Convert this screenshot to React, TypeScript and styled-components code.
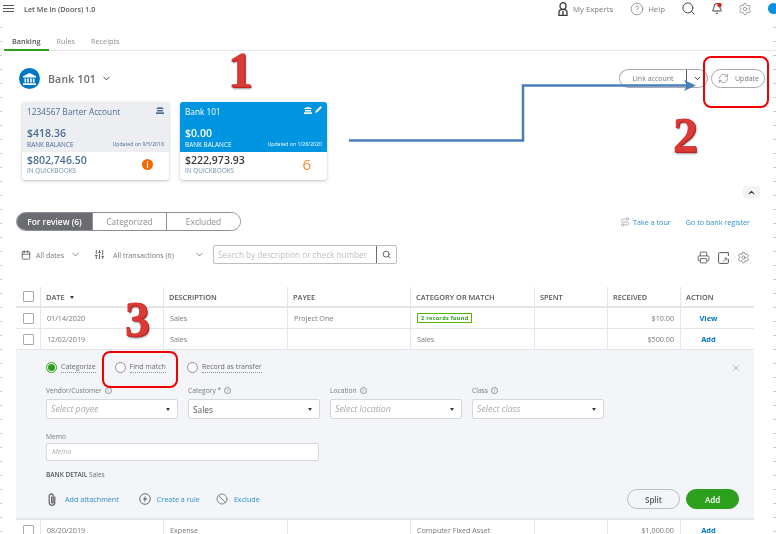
import React from 'react';
import styled, {createGlobalStyle} from 'styled-components';
import {
    Ban, Calendar, ChevronDown, ChevronUp, CircleHelp, Pencil, Printer,
    RefreshCw, Search, Settings, SlidersVertical, X, Route,
} from 'lucide-react';

const GlobalStyle = createGlobalStyle`
  html, body {
    margin: 0;
    padding: 0;
    background: #fff;
  }
  * {
    box-sizing: border-box;
  }
`;

const Page = styled.div`
  position: relative;
  width: 776px;
  height: 534px;
  overflow: hidden;
  background: #fff;
  color: #393a3d;
  font-family: "Open Sans", "Liberation Sans", sans-serif;
  font-size: 8px;
  filter: blur(0.35px);
`;

const Header = styled.div`
  display: flex;
  align-items: center;
  height: 17px;
  padding: 0 8px 0 3px;
  margin-bottom: 15px;
`;

const Title = styled.span`
  margin-left: 10px;
  font-size: 7.2px;
  font-weight: 600;
  color: #55575a;
`;

const HeaderRight = styled.div`
  display: flex;
  align-items: center;
  margin-left: auto;
  margin-right: 16px;
  color: #55575a;
`;

const HeaderItem = styled.span<{$gap: number; $iconGap?: number}>`
  display: flex;
  align-items: center;
  gap: ${p => p.$iconGap ?? 4}px;
  margin-right: ${p => p.$gap}px;
  font-size: 7.8px;
  color: #77797c;
`;

const Tabs = styled.div`
  display: flex;
  height: 19px;
  margin-left: 4px;
  border-bottom: 1px solid #e3e5e8;
`;

const Tab = styled.div<{$active?: boolean}>`
  height: 19px;
  padding: 4px 8px 0;
  font-size: 7.3px;
  font-weight: ${p => p.$active ? 600 : 400};
  color: ${p => p.$active ? '#55575a' : '#8d9096'};
  border-bottom: ${p => p.$active ? '2px solid #2ca01c' : 'none'};
`;

const AccountBar = styled.div`
  display: flex;
  align-items: center;
  height: 21px;
  margin-top: 17px;
  padding-left: 19px;
`;

const BankBadge = styled.div`
  display: flex;
  align-items: center;
  justify-content: center;
  width: 21px;
  height: 21px;
  border-radius: 50%;
  background: #0077c5;
  color: #fff;
`;

const BankName = styled.span`
  margin: 0 5px 0 8px;
  font-size: 10.5px;
  font-weight: 600;
  letter-spacing: 0.2px;
  color: #6b6c72;
`;

const AccountActions = styled.div`
  display: flex;
  align-items: center;
  margin-left: auto;
  margin-right: 11px;
`;

const LinkButton = styled.div`
  display: flex;
  align-items: center;
  justify-content: center;
  width: 68px;
  height: 19px;
  border: 1px solid #a8aaae;
  border-right: 1px solid #55575a;
  border-radius: 10px 0 0 10px;
  font-size: 7px;
  color: #77797c;
`;

const LinkCaret = styled.div`
  display: flex;
  align-items: center;
  justify-content: center;
  width: 21px;
  height: 19px;
  border: 1px solid #a8aaae;
  border-left: none;
  border-radius: 0 10px 10px 0;
  margin-right: 3px;
  color: #393a3d;
`;

const UpdateButton = styled.div`
  display: flex;
  align-items: center;
  gap: 6px;
  width: 54px;
  height: 19px;
  padding-left: 6px;
  border: 1px solid #a8aaae;
  border-radius: 10px;
  font-size: 7px;
  color: #77797c;
`;

const Cards = styled.div`
  display: flex;
  gap: 11px;
  margin-top: 13px;
  padding-left: 22px;
`;

const Card = styled.div`
  width: 147px;
  height: 78px;
  border-radius: 3px;
  overflow: hidden;
  background: #fff;
  box-shadow: 0 1px 3px rgba(0, 0, 0, 0.25);
`;

const CardTop = styled.div<{$selected?: boolean}>`
  display: flex;
  flex-direction: column;
  height: 50px;
  padding: 3px 5px 0 5px;
  background: ${p => p.$selected ? '#0095e0' : '#eceef1'};
  color: ${p => p.$selected ? '#fff' : '#4d6d94'};
`;

const CardTitle = styled.div`
  display: flex;
  align-items: center;
  justify-content: space-between;
  height: 12px;
  font-size: 8.3px;
`;

const CardIcons = styled.span`
  display: flex;
  align-items: center;
  gap: 3px;
  margin-top: -3px;
`;

const CardAmount = styled.div`
  margin-top: 10px;
  height: 13px;
  font-size: 10.5px;
  font-weight: 600;
  line-height: 13px;
`;

const CardFoot = styled.div`
  display: flex;
  align-items: center;
  justify-content: space-between;
  font-size: 6.4px;
  line-height: 9px;
`;

const CardUpdated = styled.span`
  font-size: 5.2px;
`;

const CardBottom = styled.div`
  display: flex;
  align-items: center;
  justify-content: space-between;
  height: 28px;
  padding: 0 16px 3px 5px;
`;

const BottomAmount = styled.div<{$dark?: boolean}>`
  font-size: 10.5px;
  font-weight: 600;
  line-height: 13px;
  color: ${p => p.$dark ? '#393a3d' : '#4d6d94'};
`;

const BottomLabel = styled.div`
  font-size: 6.4px;
  line-height: 8px;
  color: #6f8caf;
`;

const InfoDot = styled.span`
  display: flex;
  align-items: center;
  justify-content: center;
  width: 11px;
  height: 11px;
  border-radius: 50%;
  background: #f56a00;
  color: #fff;
  font-size: 8px;
  font-weight: 700;
`;

const CountBadge = styled.span`
  font-size: 15px;
  line-height: 15px;
  color: #f58a2c;
`;

const CollapseRow = styled.div`
  display: flex;
  justify-content: flex-end;
  height: 12px;
  margin-top: 6px;
  padding-right: 16px;
`;

const CollapseButton = styled.div`
  display: flex;
  align-items: center;
  justify-content: center;
  width: 17px;
  height: 12px;
  background: #f1f2f4;
  border-radius: 2px;
  color: #393a3d;
`;

const SegmentRow = styled.div`
  display: flex;
  align-items: center;
  justify-content: space-between;
  margin-top: 14px;
  padding: 0 26px 0 16px;
`;

const Segments = styled.div`
  display: flex;
  width: 225px;
  height: 19px;
  border: 1px solid #8d9096;
  border-radius: 10px;
  overflow: hidden;
`;

const Segment = styled.div<{$active?: boolean; $w: number}>`
  display: flex;
  align-items: center;
  justify-content: center;
  width: ${p => p.$w}px;
  border-right: 1px solid #8d9096;
  font-size: 8.4px;
  font-weight: ${p => p.$active ? 600 : 400};
  background: ${p => p.$active ? '#6b6c72' : '#fff'};
  color: ${p => p.$active ? '#fff' : '#8d9096'};

  &:last-child {
    border-right: none;
  }
`;

const TourLinks = styled.div`
  display: flex;
  align-items: center;
  font-size: 7.2px;
  color: #2d8fd0;
`;

const TourLink = styled.span`
  display: flex;
  align-items: center;
  gap: 3px;
  margin-right: 15px;
  color: #2d8fd0;
`;

const Toolbar = styled.div`
  display: flex;
  align-items: center;
  height: 19px;
  margin-top: 14px;
  padding: 0 26px 0 21px;
  color: #55575a;
`;

const FilterText = styled.span<{$w: number; $ml: number}>`
  width: ${p => p.$w}px;
  margin-left: ${p => p.$ml}px;
  font-size: 7.1px;
  color: #77797c;
`;

const FilterSpacer = styled.span`
  width: 13px;
`;

const SearchBox = styled.div`
  display: flex;
  width: 184px;
  height: 19px;
  margin-left: 8px;
  border: 1px solid #babec5;
  border-radius: 2px;
`;

const SearchText = styled.div`
  flex: 1;
  padding-left: 4px;
  border-right: 1px solid #6b6c72;
  font-size: 8.2px;
  line-height: 17px;
  color: #babec5;
  white-space: nowrap;
`;

const SearchIcon = styled.div`
  display: flex;
  align-items: center;
  justify-content: center;
  width: 19px;
  color: #393a3d;
`;

const ToolIcons = styled.div`
  display: flex;
  align-items: center;
  gap: 8px;
  margin-left: auto;
  margin-top: 6px;
  color: #55575a;
`;

const Table = styled.div`
  margin: 23px 0 0 16px;
  width: 738px;
`;

const Row = styled.div<{$head?: boolean}>`
  display: grid;
  grid-template-columns: 24px 123px 124px 123px 124px 73px 73px 74px;
  height: 21px;
  border-bottom: ${p => p.$head ? 2 : 1}px solid #e3e5e8;
`;

const Cell = styled.div<{$head?: boolean; $right?: boolean; $center?: boolean}>`
  display: flex;
  align-items: center;
  justify-content: ${p => p.$right ? 'flex-end' : p.$center ? 'center' : 'flex-start'};
  padding: ${p => p.$right ? '0 6px 0 0' : p.$center ? '0 18px 0 0' : p.$head ? '0 0 0 5px' : '0 0 0 6px'};
  border-left: 1px solid #dfe7f1;
  font-size: ${p => p.$head ? 7.4 : 7.2}px;
  font-weight: ${p => p.$head ? 600 : 400};
  color: ${p => p.$head ? '#55575a' : '#77797c'};
  white-space: nowrap;

  &:first-child {
    border-left: none;
    justify-content: center;
    padding: 0 0 0 1px;
  }
`;

const Checkbox = styled.span`
  width: 11px;
  height: 11px;
  background: #fff;
  border: 1px solid #a8aaae;
  border-radius: 1px;
`;

const SortArrow = styled.span`
  width: 0;
  height: 0;
  margin: 1px 0 0 5px;
  border-left: 2.5px solid transparent;
  border-right: 2.5px solid transparent;
  border-top: 3px solid #393a3d;
`;

const RecordsTag = styled.span`
  padding: 0 3px;
  border: 1px solid #53b700;
  font-size: 5.5px;
  line-height: 8px;
  font-weight: 700;
  letter-spacing: 0.3px;
  color: #2ca01c;
`;

const ActionLink = styled.span`
  font-size: 7.5px;
  font-weight: 700;
  color: #0077c5;
`;

const Panel = styled.div`
  position: relative;
  height: 170px;
  padding: 10px 0 0 30px;
  background: #f4f5f8;
  border-bottom: 2px solid #e3e5e8;
`;

const RadioRow = styled.div`
  display: flex;
  align-items: center;
  height: 14px;
`;

const RadioItem = styled.div<{$gap: number}>`
  display: flex;
  align-items: center;
  gap: 4px;
  margin-right: ${p => p.$gap}px;
  font-size: 7px;
  color: #6b6c72;
`;

const Radio = styled.span<{$on?: boolean}>`
  display: flex;
  align-items: center;
  justify-content: center;
  width: 11px;
  height: 11px;
  border-radius: 50%;
  background: #fff;
  border: 1px solid ${p => p.$on ? '#2ca01c' : '#8d9096'};

  &::after {
    content: '';
    width: 7px;
    height: 7px;
    border-radius: 50%;
    background: ${p => p.$on ? '#2ca01c' : 'transparent'};
  }
`;

const Underlined = styled.span`
  border-bottom: 1px dotted #8d9096;
  line-height: 9px;
  padding-bottom: 1px;
`;

const Fields = styled.div`
  display: flex;
  gap: 10px;
  margin-top: 12px;
`;

const Field = styled.div`
  width: 132px;
`;

const FieldLabel = styled.div`
  display: flex;
  align-items: center;
  gap: 3px;
  height: 9px;
  font-size: 6.7px;
  color: #77797c;
`;

const SmallHelp = styled.span`
  display: flex;
  align-items: center;
  justify-content: center;
  width: 7px;
  height: 7px;
  border: 1px solid #8d9096;
  border-radius: 50%;
  font-size: 4px;
  line-height: 1;
`;

const SelectBox = styled.div<{$empty?: boolean}>`
  display: flex;
  align-items: center;
  justify-content: space-between;
  height: 20px;
  margin-top: 4px;
  padding: 0 7px 0 4px;
  background: #fff;
  border: 1px solid #d4d7dc;
  border-radius: 2px;
  font-size: ${p => p.$empty ? 8.8 : 8.4}px;
  font-style: ${p => p.$empty ? 'italic' : 'normal'};
  color: ${p => p.$empty ? '#a8aaae' : '#55575a'};
`;

const Caret = styled.span`
  width: 0;
  height: 0;
  border-left: 2px solid transparent;
  border-right: 2px solid transparent;
  border-top: 3px solid #393a3d;
`;

const MemoBlock = styled.div`
  margin-top: 13px;
  width: 273px;
`;

const MemoInput = styled.div`
  height: 18px;
  margin-top: 2px;
  padding-left: 5px;
  background: #fff;
  border: 1px solid #d4d7dc;
  border-radius: 2px;
  font-size: 7px;
  font-style: italic;
  line-height: 16px;
  color: #a8aaae;
`;

const BankDetail = styled.div`
  margin-top: 9px;
  height: 10px;
  font-size: 6.5px;
  line-height: 10px;
  font-weight: 400;
  color: #6b6c72;

  & strong {
    font-weight: 600;
    color: #55575a;
  }
`;

const PanelFoot = styled.div`
  display: flex;
  align-items: center;
  height: 20px;
  margin-top: 9px;
`;

const FootLink = styled.span<{$gap: number; $iconGap: number; $indent?: number}>`
  display: flex;
  align-items: center;
  gap: ${p => p.$iconGap}px;
  margin: 0 ${p => p.$gap}px 0 ${p => p.$indent ?? 0}px;
  font-size: 7.2px;
  color: #2d8fd0;

  & svg {
    color: #6b6c72;
  }
`;

const FootButtons = styled.div`
  display: flex;
  gap: 6px;
  margin-left: auto;
  margin-right: 15px;
`;

const SplitButton = styled.div`
  display: flex;
  align-items: center;
  justify-content: center;
  width: 53px;
  height: 20px;
  background: #f4f5f8;
  border: 1px solid #babec5;
  border-radius: 10px;
  font-size: 8px;
  font-weight: 600;
  color: #55575a;
`;

const AddButton = styled(SplitButton)`
  background: #2ca01c;
  border-color: #2ca01c;
  color: #fff;
`;

const CloseButton = styled.span`
  position: absolute;
  top: 13px;
  right: 13px;
  color: #8d9096;
`;

const Number3D = styled.span<{$x: number; $y: number}>`
  position: absolute;
  left: ${p => p.$x}px;
  top: ${p => p.$y}px;
  font-family: "Liberation Serif", serif;
  font-size: 50px;
  font-weight: 700;
  line-height: 1;
  color: #dc3a36;
  -webkit-text-stroke: 0.8px #d0302c;
  text-shadow: 1px 1px 0 #a61e1e, 1px 2px 2px rgba(0, 0, 0, 0.4);
`;

const RedFrame = styled.div<{$x: number; $y: number; $w: number; $h: number}>`
  position: absolute;
  left: ${p => p.$x}px;
  top: ${p => p.$y}px;
  width: ${p => p.$w}px;
  height: ${p => p.$h}px;
  border: 2px solid #f00000;
  border-radius: 8px;
`;

const ArrowSvg = styled.svg`
  position: absolute;
  left: 0;
  top: 0;
  pointer-events: none;
`;

const EdgeDot = styled.span`
  position: absolute;
  left: 768px;
  top: 3px;
  width: 11px;
  height: 11px;
  border-radius: 50%;
  background: #0a8fdc;
`;

// the dashed ruler that the original capture has along both page edges
const EdgeTicks = styled.div<{$side: 'left' | 'right'}>`
  position: absolute;
  top: 27px;
  bottom: 0;
  ${p => p.$side}: 0;
  width: ${p => p.$side === 'left' ? 2 : 3}px;
  background: repeating-linear-gradient(to bottom, #c9cbcf 0, #c9cbcf 1px, transparent 1px, transparent 14px);
`;

function HamburgerIcon() {
    return (
        <svg width={11} height={7} viewBox="0 0 11 7" stroke="#55575a" strokeWidth={1}>
            <path d="M0 .5h11M0 3.500h11M0 6.500h11"/>
        </svg>
    );
}

function ExpertIcon() {
    return (
        <svg width={10} height={14} viewBox="0 0 10 14" fill="none" stroke="#393a3d" strokeWidth={1.3}>
            <ellipse cx={5} cy={4} rx={3} ry={3.4}/>
            <path d="M1 13.300V10a2.500 2.500 0 0 1 2.500-2.300h3A2.500 2.500 0 0 1 9 10v3.300zM5 9v4.300"/>
        </svg>
    );
}

function AlertBell() {
    return (
        <svg width={12} height={13} viewBox="0 0 24 24" fill="none" stroke="#393a3d" strokeWidth={2}>
            <path d="M10.268 21a2 2 0 0 0 3.464 0"/>
            <path d="M3.262 15.326A1 1 0 0 0 4 17h16a1 1 0 0 0 .74-1.673C19.410 13.956 18 12.499 18 8A6 6 0 0 0 6 8c0 4.499-1.411 5.956-2.738 7.326"/>
            <circle cx={17} cy={5} r={4.5} fill="#e5201c" stroke="none"/>
        </svg>
    );
}

function TempleIcon() {
    return (
        <svg width={13} height={12} viewBox="0 0 13 12" fill="currentColor">
            <path d="M6.500 0L13 3.200V4.500H0V3.200Z"/>
            <rect x={1.5} y={5.5} width={1.6} height={4}/>
            <rect x={4.2} y={5.5} width={1.6} height={4}/>
            <rect x={7.2} y={5.5} width={1.6} height={4}/>
            <rect x={9.9} y={5.5} width={1.6} height={4}/>
            <rect x={0} y={10.3} width={13} height={1.7}/>
        </svg>
    );
}

function CardBankIcon() {
    return (
        <svg width={8} height={8} viewBox="0 0 8 8" fill="currentColor">
            <path d="M0 3C1 .5 7 .5 8 3Z"/>
            <rect x={1} y={4} width={6} height={1.5}/>
            <rect x={0} y={6.3} width={8} height={1.7}/>
        </svg>
    );
}

function ShareBoxIcon() {
    return (
        <svg width={11} height={12} viewBox="0 0 11 12" fill="none" stroke="currentColor" strokeWidth={1}>
            <path d="M10.400 7V10.400a1 1 0 0 1-1 1H1.600a1 1 0 0 1-1-1V1.600a1 1 0 0 1 1-1H10.400V4"/>
            <path d="M5 9.500l3.500-3M6.500 6h2.300v2.300" strokeWidth={.8}/>
        </svg>
    );
}

function ClipIcon() {
    return (
        <svg width={8} height={13} viewBox="0 0 8 13" fill="none" stroke="currentColor" strokeWidth={1.3}>
            <path d="M6.800 3.500v6a2.800 2.800 0 0 1-5.600 0V3a2 2 0 0 1 4 0v6.200a.8.8 0 0 1-1.600 0V3.500"/>
        </svg>
    );
}

function RuleIcon() {
    return (
        <svg width={12} height={12} viewBox="0 0 12 12" fill="none" stroke="currentColor" strokeWidth={1}>
            <circle cx={6} cy={6} r={5.3}/>
            <path d="M6.800 2.500L3.800 6.600H5.600L5 9.500L8.200 5.300H6.300Z" fill="currentColor" stroke="none"/>
        </svg>
    );
}

const columns = ['DATE', 'DESCRIPTION', 'PAYEE', 'CATEGORY OR MATCH', 'SPENT', 'RECEIVED', 'ACTION'];

function App() {
    return (
        <>
            <GlobalStyle/>
            <Page>
                <Header>
                    <HamburgerIcon/>
                    <Title>Let Me In (Doors) 1.0</Title>
                    <HeaderRight>
                        <HeaderItem $gap={17} $iconGap={5}><ExpertIcon/>My Experts</HeaderItem>
                        <HeaderItem $gap={16}><CircleHelp size={14} strokeWidth={1.2}/>Help</HeaderItem>
                        <HeaderItem $gap={15}><Search size={15} color="#393a3d" strokeWidth={1.5}/></HeaderItem>
                        <HeaderItem $gap={15}><AlertBell/></HeaderItem>
                        <HeaderItem $gap={0}><Settings size={14} strokeWidth={1.2}/></HeaderItem>
                    </HeaderRight>
                </Header>
                <Tabs>
                    <Tab $active>Banking</Tab>
                    <Tab>Rules</Tab>
                    <Tab>Receipts</Tab>
                </Tabs>
                <AccountBar>
                    <BankBadge><TempleIcon/></BankBadge>
                    <BankName>Bank 101</BankName>
                    <ChevronDown size={11} color="#393a3d"/>
                    <AccountActions>
                        <LinkButton>Link account</LinkButton>
                        <LinkCaret><ChevronDown size={9} strokeWidth={2.5}/></LinkCaret>
                        <UpdateButton><RefreshCw size={11} strokeWidth={1.4}/>Update</UpdateButton>
                    </AccountActions>
                </AccountBar>
                <Cards>
                    <Card>
                        <CardTop>
                            <CardTitle>1234567 Barter Account<CardIcons><CardBankIcon/></CardIcons></CardTitle>
                            <CardAmount>$418.36</CardAmount>
                            <CardFoot>BANK BALANCE<CardUpdated>Updated on 9/5/2018</CardUpdated></CardFoot>
                        </CardTop>
                        <CardBottom>
                            <div>
                                <BottomAmount>$802,746.50</BottomAmount>
                                <BottomLabel>IN QUICKBOOKS</BottomLabel>
                            </div>
                            <InfoDot>i</InfoDot>
                        </CardBottom>
                    </Card>
                    <Card>
                        <CardTop $selected>
                            <CardTitle>Bank 101<CardIcons><CardBankIcon/><Pencil size={7} fill="#fff"/></CardIcons></CardTitle>
                            <CardAmount>$0.00</CardAmount>
                            <CardFoot>BANK BALANCE<CardUpdated>Updated on 1/28/2020</CardUpdated></CardFoot>
                        </CardTop>
                        <CardBottom>
                            <div>
                                <BottomAmount $dark>$222,973.93</BottomAmount>
                                <BottomLabel>IN QUICKBOOKS</BottomLabel>
                            </div>
                            <CountBadge>6</CountBadge>
                        </CardBottom>
                    </Card>
                </Cards>
                <CollapseRow>
                    <CollapseButton><ChevronUp size={9} strokeWidth={3}/></CollapseButton>
                </CollapseRow>
                <SegmentRow>
                    <Segments>
                        <Segment $active $w={76}>For review (6)</Segment>
                        <Segment $w={74}>Categorized</Segment>
                        <Segment $w={73}>Excluded</Segment>
                    </Segments>
                    <TourLinks>
                        <TourLink><Route size={10} color="#a8aaae"/>Take a tour</TourLink>
                        Go to bank register
                    </TourLinks>
                </SegmentRow>
                <Toolbar>
                    <Calendar size={10}/>
                    <FilterText $w={34} $ml={5}>All dates</FilterText>
                    <ChevronDown size={11} strokeWidth={1.5}/>
                    <FilterSpacer/>
                    <SlidersVertical size={11}/>
                    <FilterText $w={81} $ml={8}>All transactions (6)</FilterText>
                    <ChevronDown size={11} strokeWidth={1.5}/>
                    <SearchBox>
                        <SearchText>Search by description or check number</SearchText>
                        <SearchIcon><Search size={9}/></SearchIcon>
                    </SearchBox>
                    <ToolIcons>
                        <Printer size={13} strokeWidth={1.6}/>
                        <ShareBoxIcon/>
                        <Settings size={13} strokeWidth={1.2}/>
                    </ToolIcons>
                </Toolbar>
                <Table>
                    <Row $head>
                        <Cell $head><Checkbox/></Cell>
                        {columns.map((c, i) => (
                            <Cell $head key={c}>{c}{i === 0 && <SortArrow/>}</Cell>
                        ))}
                    </Row>
                    <Row>
                        <Cell><Checkbox/></Cell>
                        <Cell>01/14/2020</Cell>
                        <Cell>Sales</Cell>
                        <Cell>Project One</Cell>
                        <Cell><RecordsTag>2 records found</RecordsTag></Cell>
                        <Cell/>
                        <Cell $right>$10.00</Cell>
                        <Cell $center><ActionLink>View</ActionLink></Cell>
                    </Row>
                    <Row>
                        <Cell><Checkbox/></Cell>
                        <Cell>12/02/2019</Cell>
                        <Cell>Sales</Cell>
                        <Cell/>
                        <Cell>Sales</Cell>
                        <Cell/>
                        <Cell $right>$500.00</Cell>
                        <Cell $center><ActionLink>Add</ActionLink></Cell>
                    </Row>
                    <Panel>
                        <RadioRow>
                            <RadioItem $gap={19}><Radio $on/><Underlined>Categorize</Underlined></RadioItem>
                            <RadioItem $gap={21}><Radio/><Underlined>Find match</Underlined></RadioItem>
                            <RadioItem $gap={0}><Radio/><Underlined>Record as transfer</Underlined></RadioItem>
                        </RadioRow>
                        <Fields>
                            <Field>
                                <FieldLabel>Vendor/Customer<SmallHelp>?</SmallHelp></FieldLabel>
                                <SelectBox $empty>Select payee<Caret/></SelectBox>
                            </Field>
                            <Field>
                                <FieldLabel>Category *<SmallHelp>?</SmallHelp></FieldLabel>
                                <SelectBox>Sales<Caret/></SelectBox>
                            </Field>
                            <Field>
                                <FieldLabel>Location<SmallHelp>?</SmallHelp></FieldLabel>
                                <SelectBox $empty>Select location<Caret/></SelectBox>
                            </Field>
                            <Field>
                                <FieldLabel>Class<SmallHelp>?</SmallHelp></FieldLabel>
                                <SelectBox $empty>Select class<Caret/></SelectBox>
                            </Field>
                        </Fields>
                        <MemoBlock>
                            <FieldLabel>Memo</FieldLabel>
                            <MemoInput>Memo</MemoInput>
                        </MemoBlock>
                        <BankDetail><strong>BANK DETAIL</strong> Sales</BankDetail>
                        <PanelFoot>
                            <FootLink $gap={20} $iconGap={9} $indent={2}><ClipIcon/>Add attachment</FootLink>
                            <FootLink $gap={16} $iconGap={6}><RuleIcon/>Create a rule</FootLink>
                            <FootLink $gap={0} $iconGap={6}><Ban size={12} strokeWidth={1.6}/>Exclude</FootLink>
                            <FootButtons>
                                <SplitButton>Split</SplitButton>
                                <AddButton>Add</AddButton>
                            </FootButtons>
                        </PanelFoot>
                        <CloseButton><X size={10} strokeWidth={1.5}/></CloseButton>
                    </Panel>
                    <Row>
                        <Cell><Checkbox/></Cell>
                        <Cell>08/20/2019</Cell>
                        <Cell>Expense</Cell>
                        <Cell/>
                        <Cell>Computer Fixed Asset</Cell>
                        <Cell/>
                        <Cell $right>$1,000.00</Cell>
                        <Cell $center><ActionLink>Add</ActionLink></Cell>
                    </Row>
                </Table>
                <EdgeDot/>
                <EdgeTicks $side="left"/>
                <EdgeTicks $side="right"/>
                <ArrowSvg width={776} height={534}>
                    <path d="M349 140.500H523V85.500H690" fill="none" stroke="#4a7ebb" strokeWidth={2.5}/>
                    <path d="M684 80L696 85.500L684 91L687 85.500Z" fill="#4a7ebb"/>
                </ArrowSvg>
                <RedFrame $x={703} $y={56} $w={66} $h={52}/>
                <RedFrame $x={102} $y={351} $w={76} $h={37}/>
                <Number3D $x={228} $y={45}>1</Number3D>
                <Number3D $x={673} $y={110}>2</Number3D>
                <Number3D $x={125} $y={294}>3</Number3D>
            </Page>
        </>
    );
}

export default App;
